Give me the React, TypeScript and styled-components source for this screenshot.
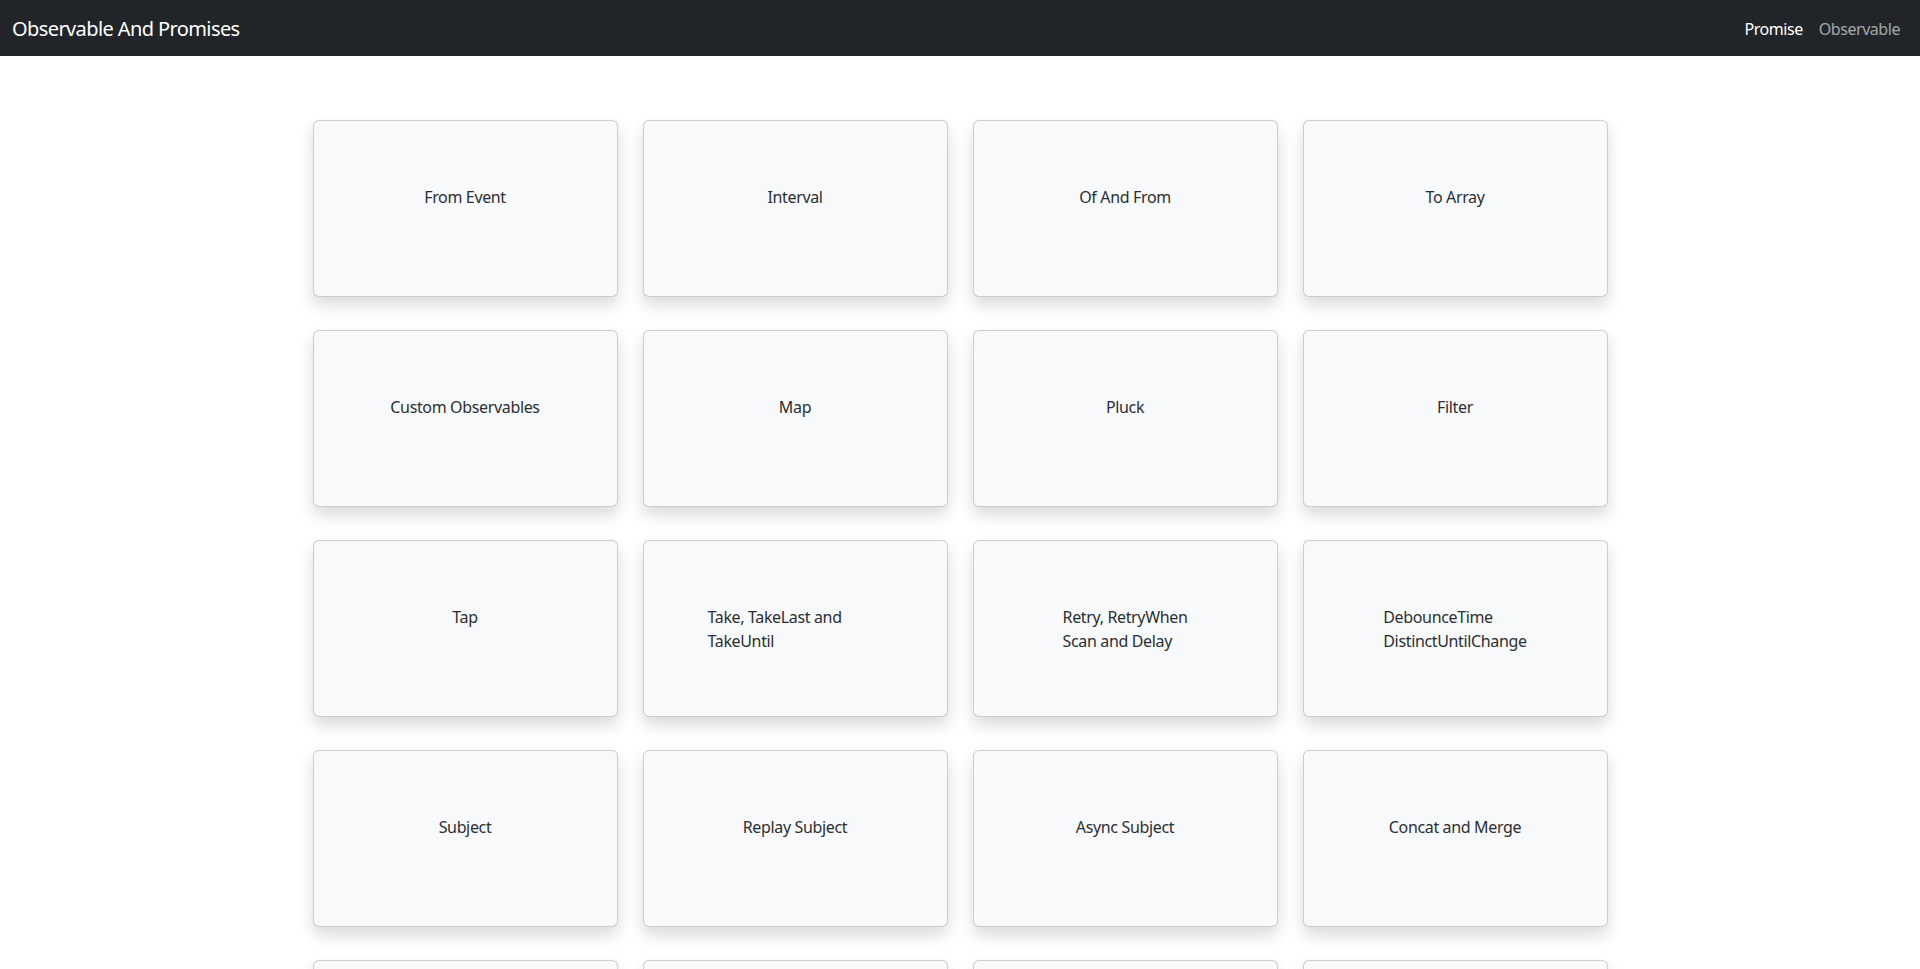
import React from "react";
import styled, { createGlobalStyle } from "styled-components";

const GlobalStyle = createGlobalStyle`
  *, *::before, *::after { box-sizing: border-box; }
  html, body { margin: 0; padding: 0; }
  body {
    font-family: "Segoe UI", "Noto Sans", "Open Sans", "Liberation Sans", sans-serif;
    font-size: 16px;
    line-height: 1.5;
    color: #212529;
    background: #fff;
    letter-spacing: -0.35px;
  }
`;

const NavBar = styled.nav`
  height: 56px;
  background: #212529;
  display: flex;
  align-items: center;
  justify-content: space-between;
  padding: 2px 12px 0;
`;

const Brand = styled.a`
  color: #fff;
  font-size: 20px;
  line-height: 30px;
  text-decoration: none;
  padding: 5px 0;
  letter-spacing: -0.6px;
`;

const NavLinks = styled.div`
  display: flex;
  align-items: center;
`;

const NavLink = styled.a<{ $active?: boolean }>`
  color: ${(p) => (p.$active ? "#fff" : "rgba(255,255,255,0.6)")};
  text-decoration: none;
  padding: 8px;
  font-size: 16px;
  letter-spacing: -0.45px;
`;

const Main = styled.main`
  padding-top: 64px;
`;

const Grid = styled.div`
  display: grid;
  grid-template-columns: repeat(4, 305px);
  column-gap: 25px;
  row-gap: 33px;
  justify-content: center;
`;

const Card = styled.div`
  height: 177px;
  background: #f8f9fa;
  border: 1px solid rgba(0, 0, 0, 0.175);
  border-radius: 6px;
  box-shadow: 0 8px 16px rgba(0, 0, 0, 0.15);
  padding: 64px;
  text-align: center;
  cursor: pointer;
`;

const Label = styled.span`
  display: inline-block;
  text-align: left;
  font-weight: 400;
  color: #2b2f33;
`;

const items: React.ReactNode[] = [
  "From Event",
  "Interval",
  "Of And From",
  "To Array",
  "Custom Observables",
  "Map",
  "Pluck",
  "Filter",
  "Tap",
  "Take, TakeLast and TakeUntil",
  <>Retry, RetryWhen<br />Scan and Delay</>,
  <>DebounceTime<br />DistinctUntilChange</>,
  "Subject",
  "Replay Subject",
  "Async Subject",
  "Concat and Merge",
  null,
  null,
  null,
  null,
];

export default function App() {
  return (
    <>
      <GlobalStyle />
      <NavBar>
        <Brand href="#">Observable And Promises</Brand>
        <NavLinks>
          <NavLink href="#" $active>Promise</NavLink>
          <NavLink href="#">Observable</NavLink>
        </NavLinks>
      </NavBar>
      <Main>
        <Grid>
          {items.map((it, i) => (
            <Card key={i}>{it && <Label>{it}</Label>}</Card>
          ))}
        </Grid>
      </Main>
    </>
  );
}
